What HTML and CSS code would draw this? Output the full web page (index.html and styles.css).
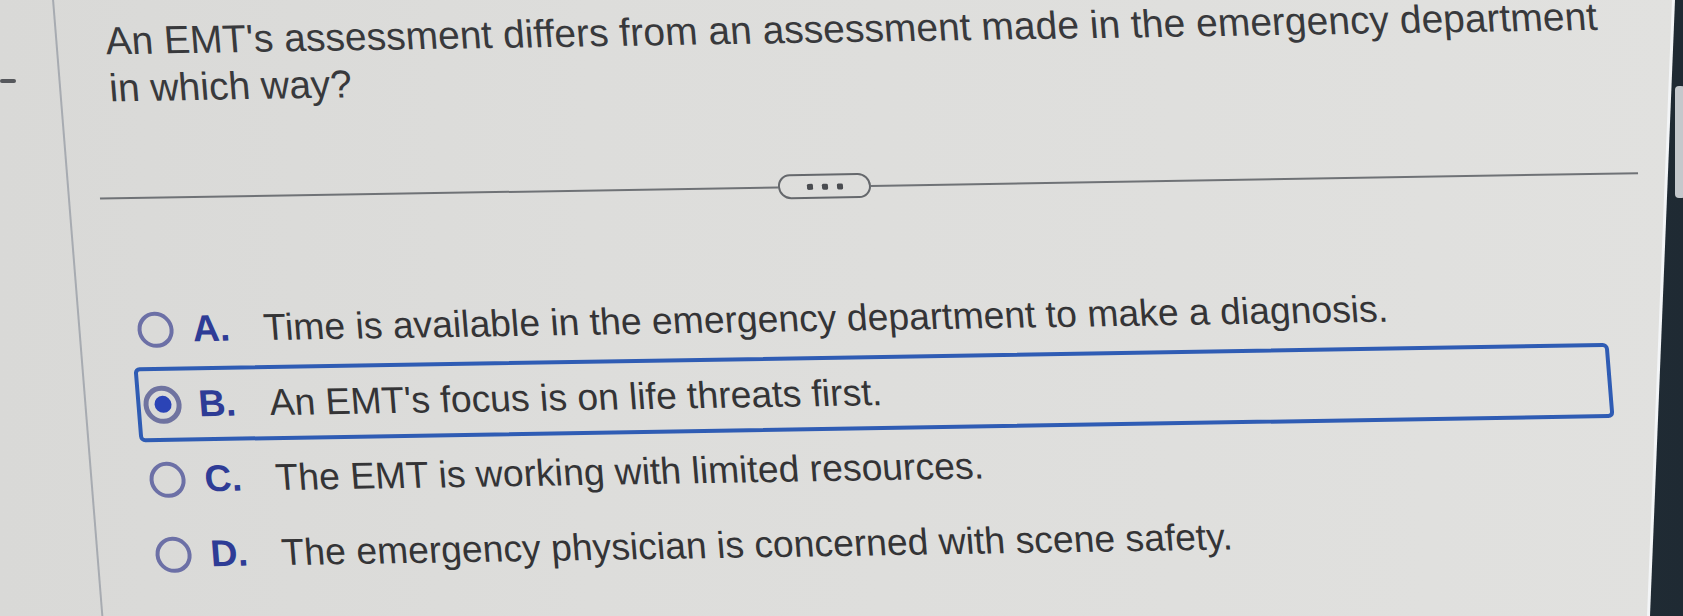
FILE: index.html
```html
<!DOCTYPE html>
<html lang="en">
<head>
<meta charset="utf-8">
<title>Question</title>
<link rel="stylesheet" href="styles.css">
</head>
<body>
  <div class="screen">
    <div class="paper">
      <span class="tick"></span>
      <div class="sheet">
        <div class="frame">
          <h1 class="question">An EMT's assessment differs from an assessment made in the emergency department in which way?</h1>
          <div class="divider">
            <span class="rule rule-left"></span>
            <span class="more"><i></i><i></i><i></i></span>
            <span class="rule rule-right"></span>
          </div>
          <ul class="options">
            <li class="option"><span class="radio"></span><span class="letter">A.</span><span class="text">Time is available in the emergency department to make a diagnosis.</span></li>
            <li class="option selected"><span class="radio"><span class="dot"></span></span><span class="letter">B.</span><span class="text">An EMT's focus is on life threats first.</span></li>
            <li class="option"><span class="radio"></span><span class="letter">C.</span><span class="text">The EMT is working with limited resources.</span></li>
            <li class="option"><span class="radio"></span><span class="letter">D.</span><span class="text">The emergency physician is concerned with scene safety.</span></li>
          </ul>
        </div>
      </div>
    </div>
  </div>
  <span class="thumb"></span>
</body>
</html>
```

FILE: styles.css
```css
html, body {
  margin: 0;
  padding: 0;
  width: 1683px;
  height: 616px;
  overflow: hidden;
}

body {
  background: linear-gradient(90deg, #1d2730 0%, #2c3944 60%, #1f2a33 100%);
  font-family: "Liberation Sans", Arial, sans-serif;
  position: relative;
}

.screen {
  width: 1683px;
  height: 616px;
  background: #f3f5f7;
  clip-path: polygon(0 0, 1675px 0, 1650px 100%, 0 100%);
}

.paper {
  position: relative;
  width: 1683px;
  height: 616px;
  background: linear-gradient(90deg, #d9d9d7 0%, #dddddb 35%, #dfdfdd 70%, #e1e1df 100%);
  clip-path: polygon(0 0, 1672px 0, 1647px 100%, 0 100%);
  overflow: hidden;
}

.tick {
  position: absolute;
  left: 0;
  top: 79px;
  width: 16px;
  height: 4px;
  background: #56585c;
  border-radius: 2px;
}

.sheet {
  width: 1683px;
  height: 640px;
  transform-origin: 0 0;
  transform: matrix(1, -0.0165, 0.08, 1, 0, 0);
}

.frame {
  margin-left: 52px;
  height: 640px;
  border-left: 2px solid #a7abb1;
  overflow: hidden;
}

.question {
  margin: 19px 0 0 0;
  padding-left: 48px;
  width: 1500px;
  font-size: 39px;
  line-height: 47px;
  font-weight: normal;
  color: #38393c;
}

.divider {
  margin: 74px 0 0 30px;
  width: 1538px;
  height: 25px;
  display: flex;
  align-items: center;
}

.rule {
  height: 2px;
  background: #6f7276;
}

.rule-left {
  width: 678px;
}

.rule-right {
  flex: 1;
}

.more {
  box-sizing: border-box;
  width: 93px;
  height: 25px;
  border: 2px solid #65686c;
  border-radius: 13px;
  display: flex;
  align-items: center;
  justify-content: center;
  gap: 9px;
}

.more i {
  width: 6px;
  height: 6px;
  border-radius: 1.5px;
  background: #4a4c50;
}

.options {
  list-style: none;
  margin: 82px 0 0 50px;
  padding: 0;
  width: 1475px;
}

.option {
  box-sizing: border-box;
  height: 75px;
  border: 4px solid transparent;
  border-radius: 6px;
  padding-left: 3px;
  display: flex;
  align-items: center;
}

.option.selected {
  border-color: #2f5cb4;
}

.radio {
  box-sizing: border-box;
  flex: none;
  width: 36px;
  height: 36px;
  border-radius: 50%;
  border: 4px solid #6c70a6;
  display: flex;
  align-items: center;
  justify-content: center;
}

.selected .radio {
  width: 38px;
  height: 38px;
  border: 5px solid #6f73a0;
}

.dot {
  width: 17px;
  height: 17px;
  border-radius: 50%;
  background: #2b44b6;
}

.letter {
  flex: none;
  width: 71px;
  margin-left: 19px;
  font-size: 37.3px;
  line-height: 67px;
  font-weight: bold;
  color: #2e3c96;
}

.selected .letter {
  margin-left: 17px;
}

.text {
  font-size: 37.3px;
  line-height: 67px;
  color: #343436;
}

.thumb {
  position: absolute;
  left: 1675px;
  top: 86px;
  width: 10px;
  height: 112px;
  border-radius: 4px;
  background: #c4c8cc;
}
```
